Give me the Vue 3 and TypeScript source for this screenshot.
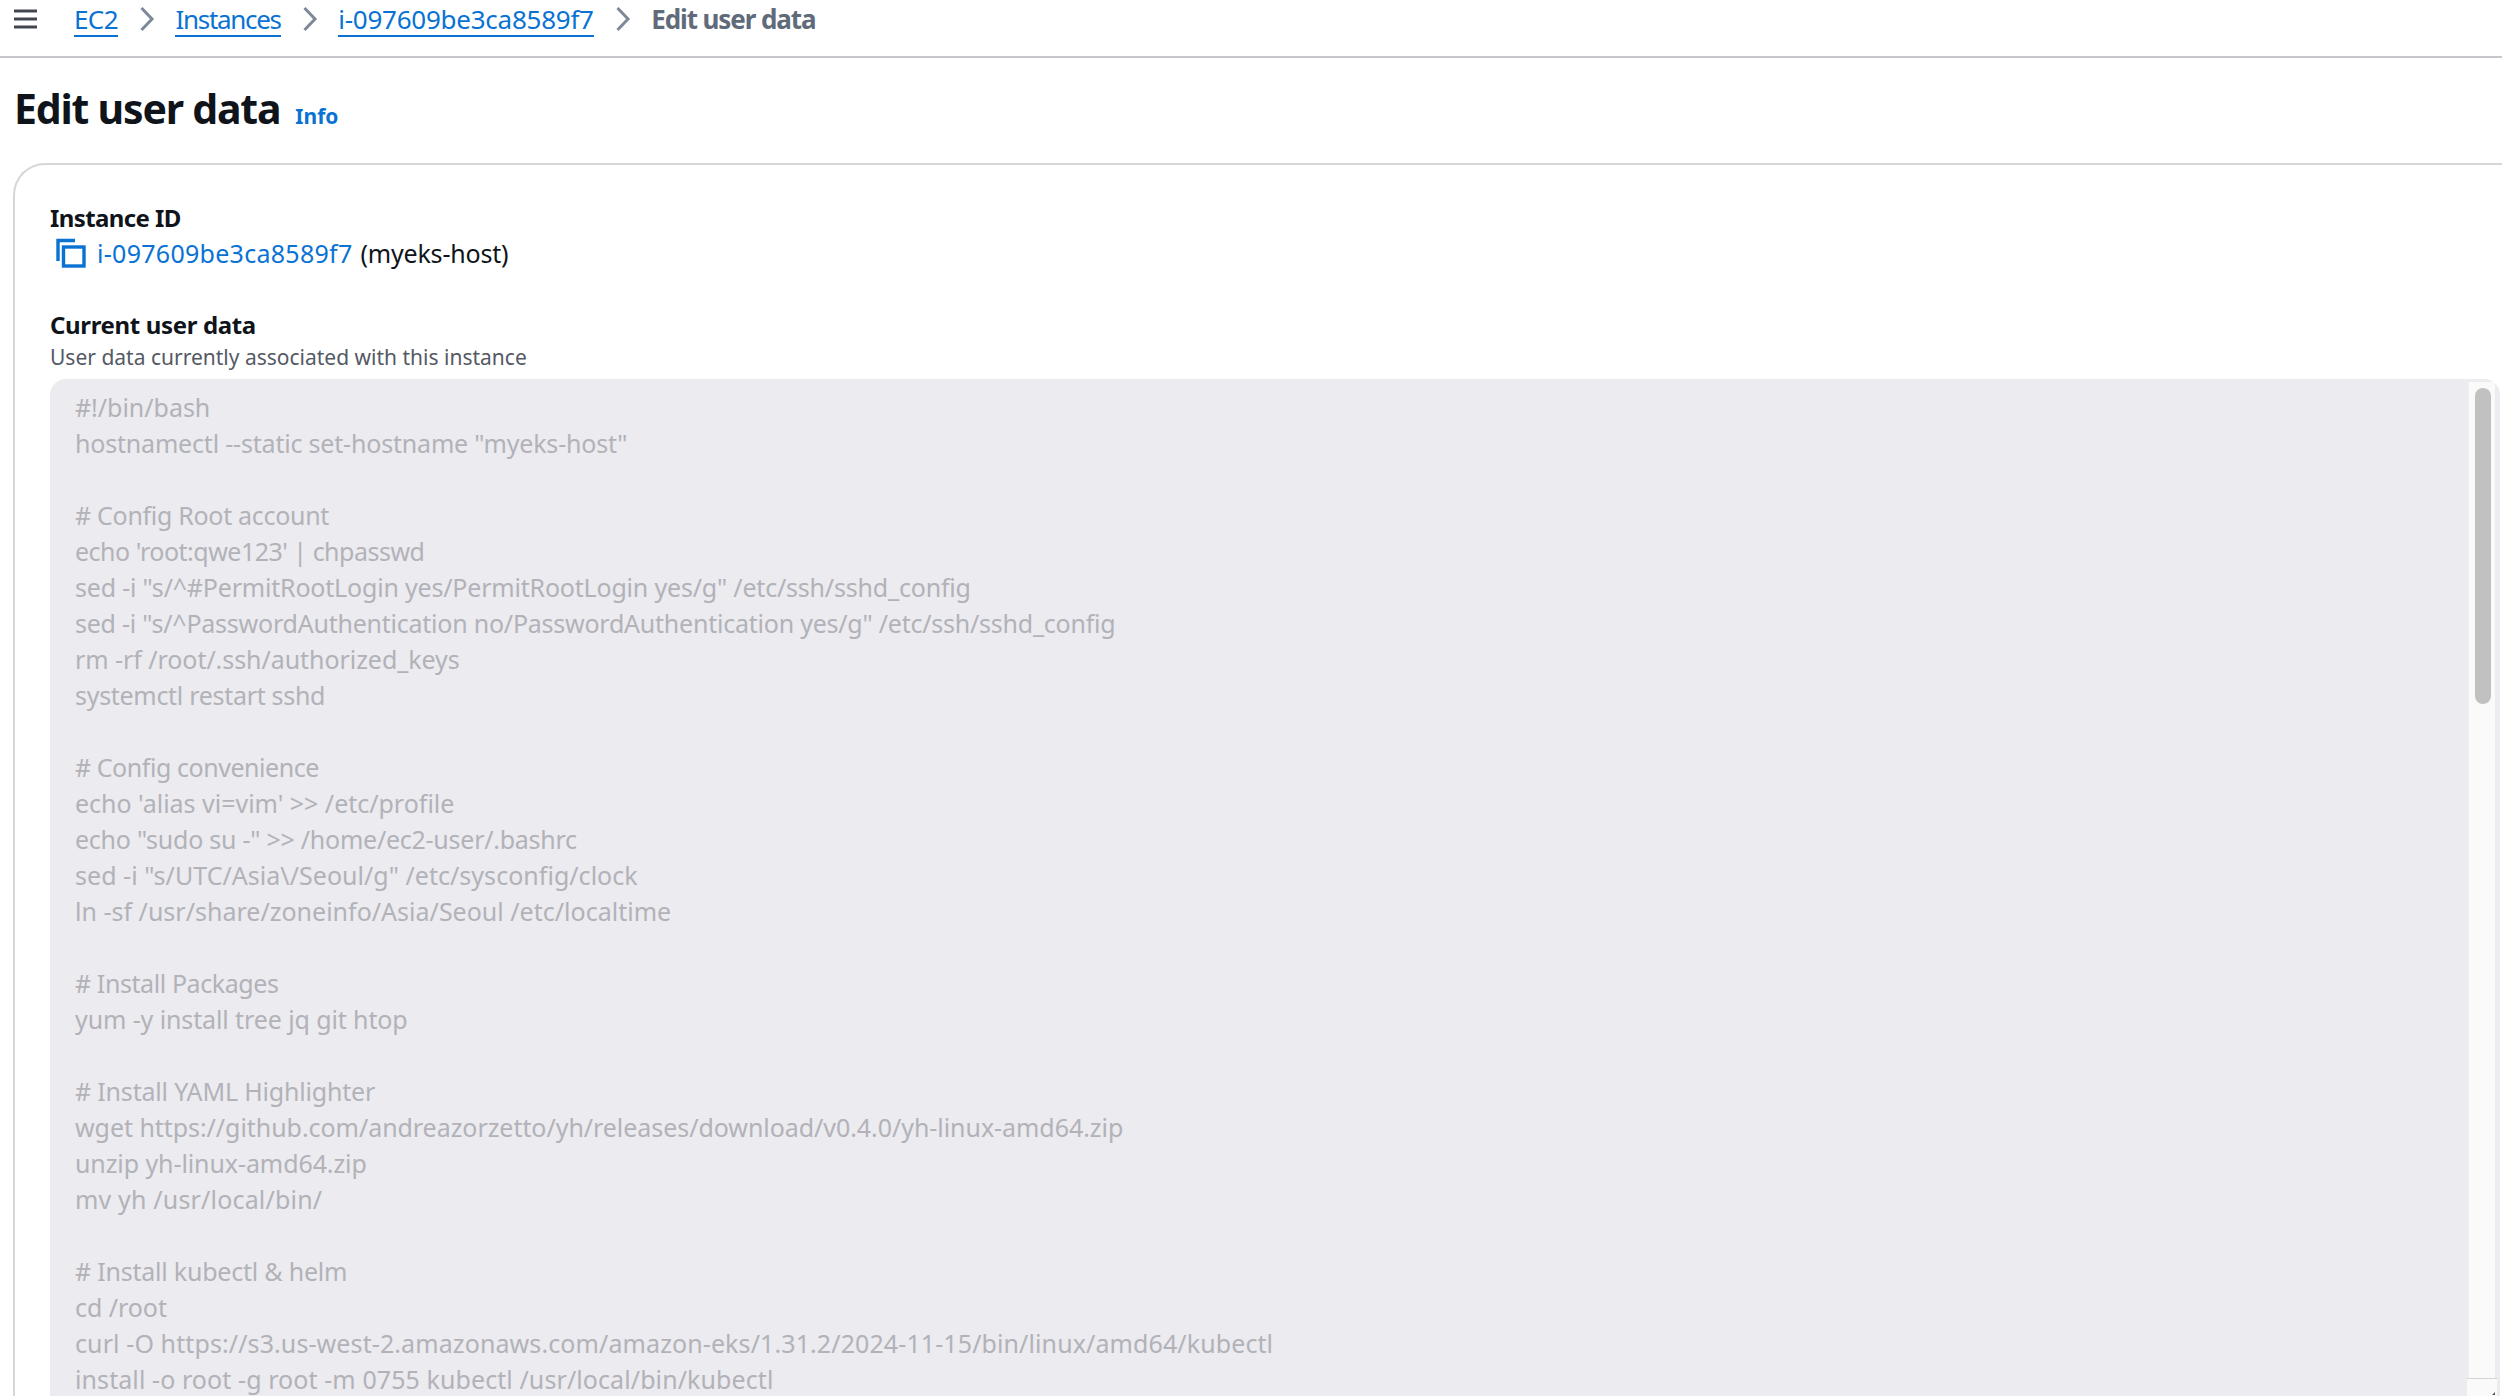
<script setup lang="ts">
interface Row { text: string; spacing: string }

// Each entry holds the line and how many pixels it has to gain or lose to fit its measured width.
const raw: [string, number][] = [
  ['#!/bin/bash', 3],
  ['hostnamectl --static set-hostname "myeks-host"', 5],
  ['', 0],
  ['# Config Root account', 0],
  ["echo 'root:qwe123' | chpasswd", -6],
  ['sed -i "s/^#PermitRootLogin yes/PermitRootLogin yes/g" /etc/ssh/sshd_config', 8],
  ['sed -i "s/^PasswordAuthentication no/PasswordAuthentication yes/g" /etc/ssh/sshd_config', 6],
  ['rm -rf /root/.ssh/authorized_keys', 8],
  ['systemctl restart sshd', 0],
  ['', 0],
  ['# Config convenience', -3],
  ["echo 'alias vi=vim' >> /etc/profile", 10],
  ['echo "sudo su -" >> /home/ec2-user/.bashrc', 2],
  ['sed -i "s/UTC/Asia\\/Seoul/g" /etc/sysconfig/clock', 16],
  ['ln -sf /usr/share/zoneinfo/Asia/Seoul /etc/localtime', 16],
  ['', 0],
  ['# Install Packages', -2],
  ['yum -y install tree jq git htop', 6],
  ['', 0],
  ['# Install YAML Highlighter', 3],
  ['wget https://github.com/andreazorzetto/yh/releases/download/v0.4.0/yh-linux-amd64.zip', 21],
  ['unzip yh-linux-amd64.zip', 5],
  ['mv yh /usr/local/bin/', 10],
  ['', 0],
  ['# Install kubectl & helm', 2],
  ['cd /root', 2],
  ['curl -O https://s3.us-west-2.amazonaws.com/amazon-eks/1.31.2/2024-11-15/bin/linux/amd64/kubectl', 38],
  ['install -o root -g root -m 0755 kubectl /usr/local/bin/kubectl', 24],
]
const rows: Row[] = raw.map(([text, d]) => ({
  text,
  spacing: `${(-0.3 + (text.length ? d / text.length : 0)).toFixed(3)}px`,
}))
const crumbs: { label: string; cls: string }[] = [
  { label: 'EC2', cls: 'c-a' },
  { label: 'Instances', cls: 'c-b' },
  { label: 'i-097609be3ca8589f7', cls: 'c-c' },
]
</script>

<template>
  <div class="page">
    <header class="topbar">
      <svg class="menu" width="26" height="22" viewBox="0 0 26 22">
        <path d="M1 3H24M1 11H24M1 19H24" stroke="#424650" stroke-width="3.2" fill="none" />
      </svg>
      <nav class="crumbs">
        <template v-for="c in crumbs" :key="c.label">
          <a class="crumb" :class="c.cls">{{ c.label }}</a>
          <svg class="chev" width="16" height="26" viewBox="0 0 16 26">
            <path d="M2.5 2L13 13L2.5 24" stroke="#7d8998" stroke-width="3" fill="none" />
          </svg>
        </template>
        <span class="current">Edit user data</span>
      </nav>
    </header>

    <div class="title-row">
      <h1 class="title">Edit user data</h1>
      <a class="info">Info</a>
    </div>

    <section class="card">
      <div class="label first">Instance ID</div>
      <div class="id-row">
        <svg class="copy" width="32" height="30" viewBox="0 0 32 30">
          <path d="M3 23V2.5H20" stroke="#0972d3" stroke-width="3.4" fill="none" />
          <rect x="8.5" y="9" width="20.5" height="19" stroke="#0972d3" stroke-width="3.4" fill="none" />
        </svg>
        <a class="id-link">i-097609be3ca8589f7</a>
        <span class="id-name">(myeks-host)</span>
      </div>

      <div class="label second">Current user data</div>
      <div class="desc">User data currently associated with this instance</div>

      <div class="area">
        <div class="code">
          <div v-for="(r, i) in rows" :key="i" class="line" :style="{ letterSpacing: r.spacing }">{{ r.text }}</div>
        </div>
        <div class="track">
          <div class="thumb"></div>
          <div class="corner"><span class="arrow"></span></div>
        </div>
      </div>
    </section>
  </div>
</template>

<style>
html, body { margin: 0; background: #fff; overflow: hidden; }
</style>

<style scoped>
.page {
  width: 2502px;
  height: 1396px;
  overflow: hidden;
  background: #fff;
  font-family: "Noto Sans", "Open Sans", sans-serif;
  color: #0f141a;
}
.topbar {
  height: 56px;
  border-bottom: 2px solid #c6c6cd;
  display: flex;
  align-items: flex-start;
  padding-left: 13px;
}
.menu { margin-top: 8px; }
.crumbs {
  display: flex;
  align-items: center;
  margin-left: 35px;
  height: 38px;
  font-size: 26px;
}
.crumb {
  color: #0972d3;
  border-bottom: 2px solid #0972d3;
  line-height: 32px;
  margin-top: 2px;
}
.c-a { letter-spacing: -0.6px; }
.c-b { letter-spacing: -1.3px; }
.c-c { letter-spacing: -0.25px; }
.chev { margin: 0 20px 0 21.5px; }
.current { color: #5f6b7a; font-weight: 700; letter-spacing: -1.1px; }
.title-row {
  display: flex;
  align-items: baseline;
  padding: 21px 0 0 14px;
  height: 80px;
  box-sizing: border-box;
}
.title {
  margin: 0;
  font-size: 41px;
  line-height: 58px;
  font-weight: 700;
  letter-spacing: -1.2px;
}
.info {
  margin-left: 15px;
  font-size: 21px;
  font-weight: 700;
  color: #0972d3;
}
.card {
  margin: 25px 0 0 13px;
  border: 2px solid #d5d5da;
  border-right: none;
  border-bottom: none;
  border-top-left-radius: 32px;
  padding: 37px 0 0 35px;
  height: 1300px;
}
.label {
  font-size: 24px;
  line-height: 32px;
  font-weight: 700;
  letter-spacing: -0.35px;
}
.first { letter-spacing: -0.6px; }
.second { margin-top: 37px; }
.id-row {
  display: flex;
  align-items: center;
  height: 38px;
  font-size: 25px;
}
.copy { margin-left: 5px; margin-right: 10px; }
.id-link { color: #0972d3; letter-spacing: 0.28px; }
.id-name { margin-left: 8px; letter-spacing: -0.2px; }
.desc {
  font-size: 21px;
  line-height: 30px;
  margin-top: 1px;
  color: #545964;
}
.area {
  margin-top: 7px;
  width: 2450px;
  height: 1100px;
  background: #ebebf0;
  border-radius: 16px;
  display: flex;
  justify-content: space-between;
  overflow: hidden;
}
.code { padding: 10px 0 0 25px; }
.line {
  height: 36px;
  line-height: 36px;
  font-size: 25px;
  color: #b2b2b8;
  white-space: pre;
}
.track {
  width: 26px;
  margin: 3px 5px 0 0;
  background: #fafafa;
  border-left: 1px solid #f0f0f0;
  position: relative;
}
.thumb {
  position: absolute;
  left: 6px;
  top: 6px;
  width: 16px;
  height: 316px;
  border-radius: 8px;
  background: #c1c1c1;
}
.corner {
  position: absolute;
  left: -2px;
  top: 996px;
  width: 30px;
  height: 100px;
  background: #fafafa;
  border-top: 1px solid #d4d4d4;
}
.arrow {
  position: absolute;
  right: 2px;
  top: 13px;
  width: 0;
  height: 0;
  border-left: 3px solid transparent;
  border-bottom: 3px solid #555;
}
</style>
